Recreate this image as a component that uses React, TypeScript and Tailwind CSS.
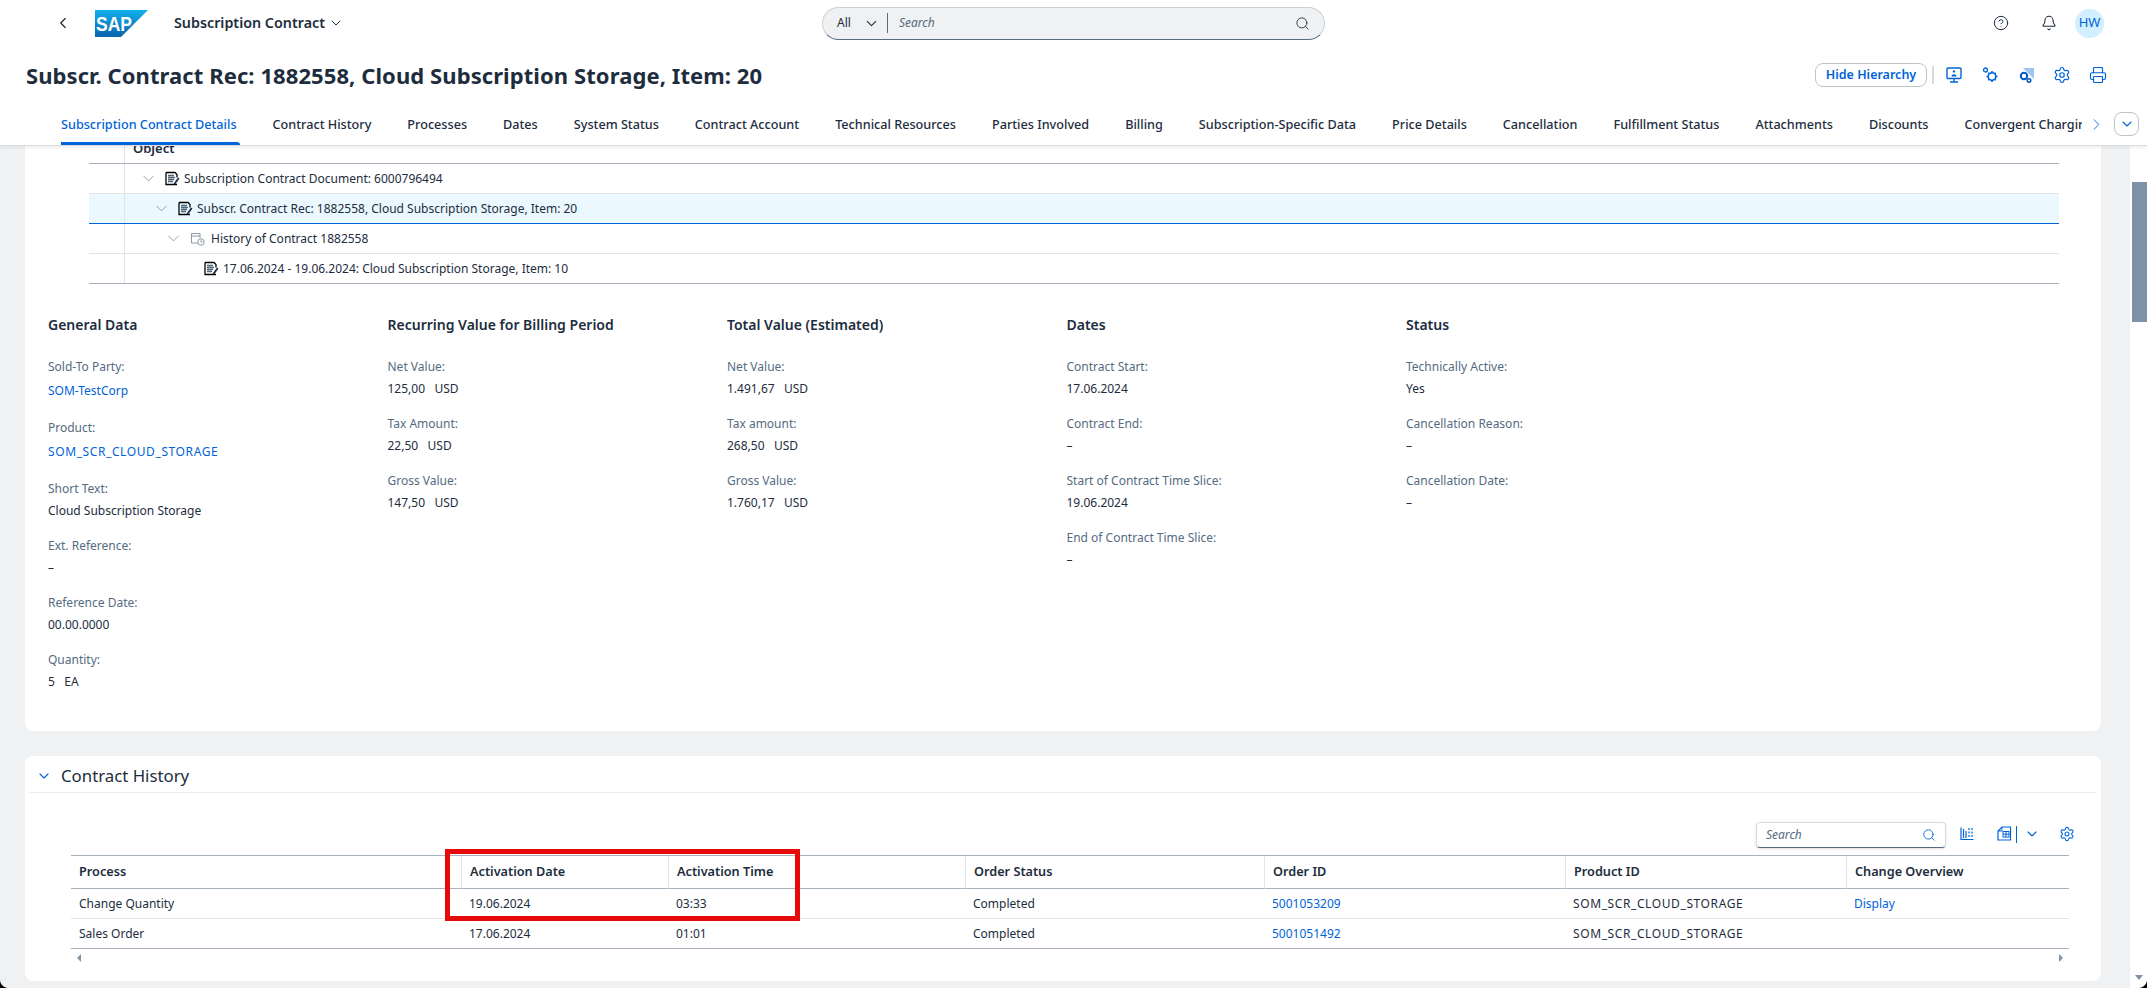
import React from 'react';
import { Bell, ChevronDown, ChevronLeft, ChevronRight, CircleHelp, Printer, Search, Settings } from 'lucide-react';

const FONT = "font-['Noto_Sans',sans-serif]";

const TABS = [
  'Subscription Contract Details',
  'Contract History',
  'Processes',
  'Dates',
  'System Status',
  'Contract Account',
  'Technical Resources',
  'Parties Involved',
  'Billing',
  'Subscription-Specific Data',
  'Price Details',
  'Cancellation',
  'Fulfillment Status',
  'Attachments',
  'Discounts',
];

const TREE = [
  { text: 'Subscription Contract Document: 6000796494', pad: 14, chevron: true, icon: 'doc' },
  { text: 'Subscr. Contract Rec: 1882558, Cloud Subscription Storage, Item: 20', pad: 27, chevron: true, icon: 'doc', selected: true },
  { text: 'History of Contract 1882558', pad: 39, chevron: true, icon: 'history' },
  { text: '17.06.2024 - 19.06.2024: Cloud Subscription Storage, Item: 10', pad: 79, chevron: false, icon: 'doc' },
];

type Field = { label: string; value: string; link?: boolean; caps?: boolean };

const SECTIONS: { title: string; fields: Field[] }[] = [
  {
    title: 'General Data',
    fields: [
      { label: 'Sold-To Party:', value: 'SOM-TestCorp', link: true },
      { label: 'Product:', value: 'SOM_SCR_CLOUD_STORAGE', link: true, caps: true },
      { label: 'Short Text:', value: 'Cloud Subscription Storage' },
      { label: 'Ext. Reference:', value: '–' },
      { label: 'Reference Date:', value: '00.00.0000' },
      { label: 'Quantity:', value: '5\u00a0\u00a0\u00a0EA' },
    ],
  },
  {
    title: 'Recurring Value for Billing Period',
    fields: [
      { label: 'Net Value:', value: '125,00\u00a0\u00a0\u00a0USD' },
      { label: 'Tax Amount:', value: '22,50\u00a0\u00a0\u00a0USD' },
      { label: 'Gross Value:', value: '147,50\u00a0\u00a0\u00a0USD' },
    ],
  },
  {
    title: 'Total Value (Estimated)',
    fields: [
      { label: 'Net Value:', value: '1.491,67\u00a0\u00a0\u00a0USD' },
      { label: 'Tax amount:', value: '268,50\u00a0\u00a0\u00a0USD' },
      { label: 'Gross Value:', value: '1.760,17\u00a0\u00a0\u00a0USD' },
    ],
  },
  {
    title: 'Dates',
    fields: [
      { label: 'Contract Start:', value: '17.06.2024' },
      { label: 'Contract End:', value: '–' },
      { label: 'Start of Contract Time Slice:', value: '19.06.2024' },
      { label: 'End of Contract Time Slice:', value: '–' },
    ],
  },
  {
    title: 'Status',
    fields: [
      { label: 'Technically Active:', value: 'Yes' },
      { label: 'Cancellation Reason:', value: '–' },
      { label: 'Cancellation Date:', value: '–' },
    ],
  },
];

const HISTORY_COLS = ['Process', 'Activation Date', 'Activation Time', 'Order Status', 'Order ID', 'Product ID', 'Change Overview'];

const HISTORY_ROWS = [
  ['Change Quantity', '19.06.2024', '03:33', 'Completed', '5001053209', 'SOM_SCR_CLOUD_STORAGE', 'Display'],
  ['Sales Order', '17.06.2024', '01:01', 'Completed', '5001051492', 'SOM_SCR_CLOUD_STORAGE', ''],
];

function SapLogo() {
  return (
    <svg width="53" height="27" viewBox="0 0 53 27">
      <defs>
        <linearGradient id="sapGrad" x1="0" y1="0" x2="0" y2="1">
          <stop offset="0" stopColor="#12b0ec" />
          <stop offset="1" stopColor="#0a64ad" />
        </linearGradient>
      </defs>
      <polygon points="0,0 53,0 26,27 0,27" fill="url(#sapGrad)" />
      <text x="1" y="21" fill="#fff" fontFamily="Liberation Sans, sans-serif" fontWeight="700" fontSize="20" textLength="36" lengthAdjust="spacingAndGlyphs">SAP</text>
    </svg>
  );
}

function DocIcon() {
  return (
    <svg width="15" height="15" viewBox="0 0 15 15" fill="none">
      <path d="M1 1.5h9l2 2v3M12 13.5H1V1.5" stroke="#000" strokeWidth="1.3" />
      <path d="M3 4.5h6M3 6.5h7M3 8.5h6M3 10.5h5" stroke="#4f6478" strokeWidth="1.3" />
      <path d="M9 12l4-5.5 1.5 1.1-4 5.4-1.8.5z" fill="#1d2d3e" />
    </svg>
  );
}

function HistoryIcon() {
  return (
    <svg width="15" height="15" viewBox="0 0 15 15" fill="none" stroke="#8b9aa8" strokeWidth="1">
      <path d="M8 12H1.5V2.5H10V7" />
      <path d="M1.5 5h8.5" />
      <circle cx="11" cy="11" r="3.2" />
      <path d="M11 9.2V11h1.6" />
    </svg>
  );
}

function PresentIcon() {
  return (
    <svg width="18" height="18" viewBox="0 0 18 18" fill="none" stroke="#0064d9" strokeWidth="1.4">
      <rect x="2" y="2" width="14" height="10.5" rx="1" />
      <path d="M9 12.5v3M5 16h8" />
      <circle cx="9" cy="5.4" r="1.2" fill="#0064d9" stroke="none" />
      <path d="M6.5 10.5c0-3 5-3 5 0z" fill="#0064d9" stroke="none" />
    </svg>
  );
}

function GearsIcon() {
  return (
    <svg width="18" height="18" viewBox="0 0 18 18" fill="none" stroke="#0064d9">
      <circle cx="4.5" cy="4" r="2" strokeWidth="1.3" />
      <circle cx="11" cy="10.5" r="3.8" strokeWidth="1.6" />
      <path d="M11 5v1.6M11 14.4V16M5.5 10.5h1.6M14.9 10.5h1.6M7.2 6.7l1 1M13.8 13.3l1 1M14.8 6.7l-1 1M8.2 13.3l-1 1" strokeWidth="1.6" />
    </svg>
  );
}

function GearArrowIcon() {
  return (
    <svg width="18" height="18" viewBox="0 0 18 18" fill="none">
      <path d="M6 2h11v11z" fill="#9fc4f0" />
      <circle cx="7" cy="10" r="3.2" stroke="#0057c2" strokeWidth="2" />
      <circle cx="12" cy="14.5" r="1.8" stroke="#0057c2" strokeWidth="1.4" />
    </svg>
  );
}

function ColumnsIcon() {
  return (
    <svg width="14" height="14" viewBox="0 0 14 14" fill="none" stroke="#0064d9" strokeWidth="1.2">
      <path d="M1 0.5v12h12.5" />
      <path d="M3.5 2v9M6 4v7M9 1v2M9 4.5v2M9 8v2M12 1v2M12 4.5v2M12 8v2" />
    </svg>
  );
}

function ExportIcon() {
  return (
    <svg width="15" height="15" viewBox="0 0 15 15" fill="none" stroke="#0064d9" strokeWidth="1.2">
      <path d="M5 1h8.5v13H1V5z" />
      <path d="M5 1v4H1" strokeWidth="1" />
      <rect x="6" y="5.5" width="6" height="5.5" strokeWidth="1" />
      <path d="M9 5.5V11M6 8.2h6" strokeWidth="1" />
    </svg>
  );
}

function WindowCorner({ flip }: { flip?: boolean }) {
  return (
    <svg width="8" height="8" viewBox="0 0 8 8" className={flip ? 'absolute bottom-0 right-0 -scale-x-100' : 'absolute bottom-0 left-0'}>
      <path d="M0 0v8h8C4 8 0 4 0 0z" fill="#000" />
    </svg>
  );
}

function Header() {
  return (
    <header className="relative z-10 bg-white border-b border-[#d9dcdf] shadow-[0_2px_3px_rgba(0,0,0,0.06)]">
      <div className="h-[46px] flex items-center">
        <ChevronLeft className="w-[18px] h-[18px] ml-[54px] text-[#1d2d3e]" strokeWidth={1.6} />
        <div className="ml-[23px]"><SapLogo /></div>
        <span className="ml-[26px] text-[14.3px] font-semibold text-[#1d2d3e]">Subscription Contract</span>
        <ChevronDown className="ml-[3px] w-[16px] h-[16px] text-[#1d2d3e]" strokeWidth={1.5} />
        <div className="ml-[478px] w-[503px] h-[33px] flex items-center rounded-full bg-[#eff1f2] border border-[#c9cfd5] border-b-[#556b82] pl-[14px] pr-[14px]">
          <span className="text-[12px] text-[#1d2d3e]">All</span>
          <ChevronDown className="ml-[12px] w-[17px] h-[17px] text-[#1d2d3e]" strokeWidth={1.5} />
          <span className="ml-[7px] w-px h-[20px] bg-[#556b82]" />
          <span className="ml-[11px] text-[12px] italic text-[#556b82] flex-1">Search</span>
          <Search className="w-[15px] h-[15px] text-[#1d2d3e]" strokeWidth={1.4} />
        </div>
        <CircleHelp className="ml-[668px] w-[16px] h-[16px] text-[#1d2d3e]" strokeWidth={1.5} />
        <Bell className="ml-[32px] w-[16px] h-[16px] text-[#1d2d3e]" strokeWidth={1.6} />
        <div className="ml-[18px] w-[29px] h-[29px] rounded-full bg-[#d1efff] text-[#0064d9] text-[13px] flex items-center justify-center">HW</div>
      </div>
      <div className="h-[58px] flex items-center pl-[26px] pr-[40px]">
        <h1 className="flex-1 text-[22px] tracking-[0.08px] font-bold text-[#1d2d3e]">Subscr. Contract Rec: 1882558, Cloud Subscription Storage, Item: 20</h1>
        <button className="w-[112px] h-[24px] rounded-[8px] border border-[#bcc3ca] bg-white text-[12.5px] font-semibold text-[#0064d9]">Hide Hierarchy</button>
        <span className="ml-[5px] w-[2px] h-[18px] bg-[#d5dadd]" />
        <div className="ml-[11px] flex items-center gap-[18px]">
          <PresentIcon />
          <GearsIcon />
          <GearArrowIcon />
          <Settings className="w-[18px] h-[18px] text-[#0064d9]" strokeWidth={1.6} />
          <Printer className="w-[18px] h-[18px] text-[#0064d9]" strokeWidth={1.6} />
        </div>
      </div>
      <div className="h-[41px] flex items-center pl-[61px]">
        <div className="flex gap-[36px] w-[2021px] overflow-hidden whitespace-nowrap h-full">
          {TABS.map((tab, i) => (
            <div key={tab} className={`relative h-full flex items-center pb-[1px] text-[12.65px] font-medium ${i === 0 ? 'text-[#0064d9]' : 'text-[#1d2d3e]'}`}>
              {tab}
              {i === 0 && <span className="absolute left-[-2px] right-[-3px] bottom-0 h-[3px] bg-[#0064d9] rounded-t-sm" />}
            </div>
          ))}
          <div className="h-full flex items-center pb-[1px] text-[12.65px] font-medium text-[#1d2d3e]">Convergent Charging</div>
        </div>
        <ChevronRight className="ml-[5px] w-[19px] h-[19px] text-[#0064d9]" strokeWidth={1.1} />
        <button className="ml-[8px] w-[25px] h-[24px] mb-[2px] rounded-[8px] border border-[#bcc3ca] flex items-center justify-center">
          <ChevronDown className="w-[16px] h-[16px] text-[#0064d9]" strokeWidth={1.6} />
        </button>
      </div>
    </header>
  );
}

function Hierarchy() {
  return (
    <div className="ml-[64px] mr-[42px]">
      <div className="h-[18px] flex border-b border-[#a8b2bd] overflow-hidden">
        <div className="w-[36px] border-r border-[#e2e5e8]" />
        <div className="pl-[8px] -mt-[7px] text-[13px] font-semibold text-[#1d2d3e]">Object</div>
      </div>
      {TREE.map(row => (
        <div key={row.text} className={`h-[30px] flex ${row.selected ? 'bg-[#ebf8ff] border-b border-[#0064d9]' : 'border-b border-[#e5e5e5]'} last:border-[#a8b2bd]`}>
          <div className="w-[36px] border-r border-[#e2e5e8]" />
          <div className="flex items-center" style={{ paddingLeft: row.pad }}>
            {row.chevron && <ChevronDown className="w-[19px] h-[19px] mr-[7px] text-[#7a8b9c]" strokeWidth={1} />}
            {row.icon === 'doc' ? <DocIcon /> : <HistoryIcon />}
            <span className={`${row.icon === 'doc' ? 'ml-[4px]' : 'ml-[6px]'} text-[12px] text-[#1d2d3e]`}>{row.text}</span>
          </div>
        </div>
      ))}
    </div>
  );
}

function DetailColumns() {
  return (
    <div className="mt-[31px] pl-[23px] grid grid-cols-[339.5px_339.5px_339.5px_339.5px_1fr] h-[417px]">
      {SECTIONS.map(section => (
        <div key={section.title}>
          <h3 className="h-[20px] mb-[22px] leading-[20px] text-[14px] font-semibold text-[#1d2d3e]">{section.title}</h3>
          {section.fields.map(f => (
            <div key={f.label} className={f.link ? 'h-[61px]' : 'h-[57px]'}>
              <div className="leading-[20px] text-[12px] text-[#556b82]">{f.label}</div>
              <div className={`leading-[20px] text-[12px] ${f.link ? 'mt-[4px] text-[#0064d9]' : 'mt-[2px] text-[#1d2d3e]'} ${f.caps ? 'tracking-[0.6px]' : ''}`}>{f.value}</div>
            </div>
          ))}
        </div>
      ))}
    </div>
  );
}

function HistoryTable() {
  return (
    <div className="ml-[46px] mr-[32px]">
      <div className="grid grid-cols-[390px_207px_297px_299px_301px_281px_223px] border-t border-[#a8b2bd]">
        {HISTORY_COLS.map((col, i) => (
          <div key={col} className={`h-[33px] flex items-center pl-[8px] border-b border-[#a8b2bd] text-[12.7px] font-semibold text-[#1d2d3e] ${i > 0 ? 'border-l border-l-[#e2e5e8]' : ''}`}>{col}</div>
        ))}
        {HISTORY_ROWS.map((row, r) =>
          row.map((cell, i) => (
            <div key={`${r}-${i}`} className={`h-[30px] flex items-center pl-[8px] border-b text-[12px] ${r === 1 ? 'border-[#a8b2bd]' : 'border-[#e5e5e5]'} ${i === 4 || i === 6 ? 'text-[#0064d9]' : 'text-[#1d2d3e]'} ${i === 5 ? 'tracking-[0.6px]' : ''}`}>{cell}</div>
          ))
        )}
      </div>
      <div className="h-[18px] flex items-center justify-between px-[6px]">
        <span className="w-0 h-0 border-y-[4px] border-y-transparent border-r-[4px] border-r-[#8396a8]" />
        <span className="w-0 h-0 border-y-[4px] border-y-transparent border-l-[4px] border-l-[#8396a8]" />
      </div>
    </div>
  );
}

function ContractHistory() {
  return (
    <section className="mt-[25px] h-[225px] bg-white rounded-[8px]">
      <div className="h-[37px] mx-[4px] pt-[3px] flex items-center border-b border-[#eaecee]">
        <ChevronDown className="ml-[7px] w-[16px] h-[16px] text-[#0064d9]" strokeWidth={1.7} />
        <h2 className="ml-[9px] text-[16.8px] text-[#1d2d3e]">Contract History</h2>
      </div>
      <div className="mt-[29px] mb-[7px] pr-[26px] h-[26px] flex items-center justify-end">
        <div className="w-[190px] h-[26px] rounded-[4px] border border-[#d5dadd] border-b-[#556b82] flex items-center pl-[9px] pr-[9px] shadow-sm">
          <span className="flex-1 text-[12px] italic text-[#556b82]">Search</span>
          <Search className="w-[14px] h-[14px] text-[#0064d9]" strokeWidth={1.5} />
        </div>
        <div className="ml-[14px] -mt-[2px]"><ColumnsIcon /></div>
        <div className="ml-[23px] -mt-[3px]"><ExportIcon /></div>
        <span className="ml-[4px] -mt-[2px] w-px h-[17px] bg-[#0064d9]" />
        <ChevronDown className="ml-[7px] -mt-[2px] w-[16px] h-[16px] text-[#0064d9]" strokeWidth={1.6} />
        <Settings className="ml-[19px] -mt-[2px] w-[16px] h-[16px] text-[#0064d9]" strokeWidth={1.6} />
      </div>
      <HistoryTable />
    </section>
  );
}

export default function App() {
  return (
    <div className={`relative h-[988px] w-[2147px] overflow-hidden flex flex-col bg-white ${FONT}`}>
      <Header />
      <div className="relative flex-1 flex min-h-0">
        <main className="w-[2130px] bg-[#eff1f2] pl-[25px] pr-[29px]">
          <section className="h-[585px] bg-white rounded-b-[8px] overflow-hidden">
            <Hierarchy />
            <DetailColumns />
          </section>
          <ContractHistory />
        </main>
        <aside className="w-[17px] bg-white pl-[2px] pt-[36px] relative">
          <div className="h-[140px] bg-[#7d91a7]" />
          <span className="absolute bottom-[8px] left-[5px] w-0 h-0 border-x-[4px] border-x-transparent border-t-[5px] border-t-[#7d91a7]" />
        </aside>
        <div className="absolute left-[445px] top-[703px] w-[355px] h-[72px] border-[5px] border-[#e60a0a]" />
      </div>
      <WindowCorner />
      <WindowCorner flip />
    </div>
  );
}
